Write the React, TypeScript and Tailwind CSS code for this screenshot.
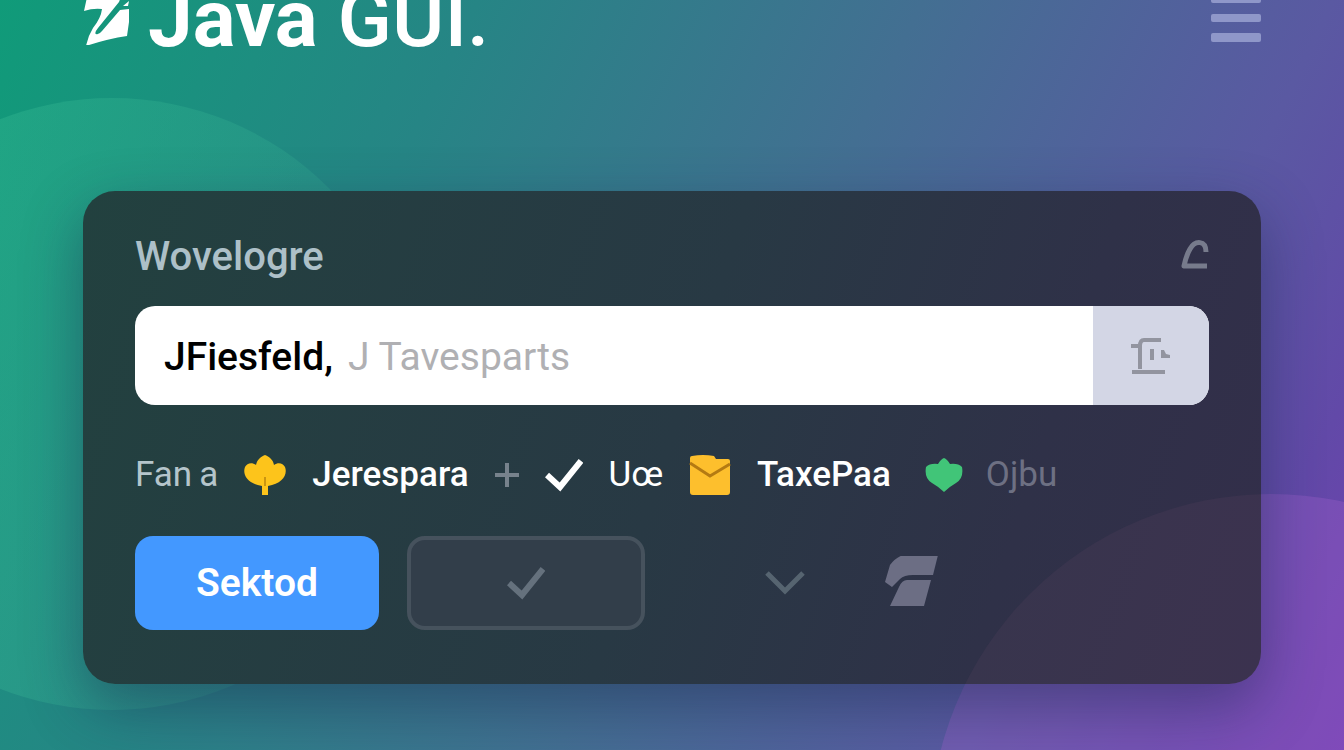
import React from "react";

function LogoMark() {
  return (
    <svg width="48" height="66" viewBox="82 -21 48 66" className="shrink-0" fill="#fff" aria-hidden="true">
      <path d="M83 11 L88 -12 L124 -14 L118 2 L97 28 Q93 33 95 34 Q98 35 101 31 L119 10 L128 9 L128 22 L126 36 Q106 39 85 46 Q87 36 92 28 Q100 18 101 9 Q92 8 83 11 Z" />
      <path d="M122 6 L128 1 L127 6 Z" />
    </svg>
  );
}

function Flower() {
  return (
    <svg width="42" height="42" viewBox="0 0 42 42" className="shrink-0" aria-hidden="true">
      <path
        d="M21 1 C26 3 29 6 30 11 C34 8 39 9 41 13 C44 21 38 30 24 32 V41 H18 V32 C4 30 -2 21 1 13 C3 9 8 8 12 11 C13 6 16 3 21 1 Z"
        fill="#fdc41b"
      />
      <path d="M21 23 V32" stroke="#b8860f" strokeWidth="1.5" />
    </svg>
  );
}

function Folder() {
  return (
    <svg width="42" height="42" viewBox="0 0 42 42" className="shrink-0" aria-hidden="true">
      <path d="M3 2 Q14 0 25 2 L27 5 H39 Q41 5 41 7 V38 Q41 41 38 41 H4 Q1 41 1 38 V4 Q1 2 3 2 Z" fill="#fdbf2d" />
      <path d="M1 9 L21 22 L41 10" fill="none" stroke="#b47a12" strokeWidth="3" />
    </svg>
  );
}

function Leaf() {
  return (
    <svg width="38" height="42" viewBox="0 0 38 42" className="shrink-0" aria-hidden="true">
      <path
        d="M19 4 Q22 5 25 10 Q33 9 37 13 Q39 24 31 29 Q24 33 19 38 Q14 33 7 29 Q-1 24 1 13 Q5 9 13 10 Q16 5 19 4 Z"
        fill="#41c578"
      />
    </svg>
  );
}

function Check() {
  return (
    <svg width="38" height="34" viewBox="0 0 38 34" className="shrink-0" fill="none" stroke="currentColor" aria-hidden="true">
      <path d="M2 17 L15 29 L36 3" strokeWidth="6" />
    </svg>
  );
}

export default function App() {
  return (
    <div className="relative isolate min-h-screen overflow-hidden bg-[linear-gradient(116deg,#109b79_0%,#268585_28%,#436f92_54%,#5a59a2_78%,#6249a8_90%,#7040b0_100%)] px-[83px] pb-[65px] font-['Roboto','Liberation_Sans',sans-serif]">
      <div className="absolute top-[98px] -left-[194px] -z-10 size-[612px] rounded-full bg-[linear-gradient(100deg,#3fc39a50_20%,#3fc39a20_90%)]" />
      <div className="absolute top-[494px] -right-[268px] -z-10 size-[682px] rounded-full bg-[#a763d2]/30" />

      <header className="-mt-[21px] flex h-[212px] items-start justify-between">
        <div className="flex items-start gap-[17px] text-white">
          <LogoMark />
          <h1 className="text-[80px] leading-[80px] font-medium">
            <span className="font-bold">Java</span> GUI.
          </h1>
        </div>
        <button aria-label="Menu" className="mt-[16px] flex w-[50px] flex-col gap-[11px]">
          <span className="h-[8px] w-full rounded-xs bg-[#8f97c9]" />
          <span className="h-[8px] w-full rounded-xs bg-[#8f97c9]" />
          <span className="h-[9px] w-full rounded-xs bg-[#8f97c9]" />
        </button>
      </header>

      <main className="relative overflow-hidden rounded-[32px] bg-[linear-gradient(108deg,#22413f_0%,#283944_50%,#2f3148_78%,#332e4a_100%)] px-[52px] pt-[46px] pb-[54px] shadow-[0_22px_60px_rgba(25,35,75,0.45)]">
        <div className="absolute top-[303px] -right-[351px] size-[682px] rounded-full bg-[#5e4864]/20" />
        <div className="relative flex h-[40px] items-center justify-between">
          <label htmlFor="field" className="text-[40px] leading-[40px] font-medium text-[#adc0c8]">
            Wovelogre
          </label>
          <svg width="28" height="30" viewBox="0 3 28 30" fill="none" stroke="#777b8c" strokeWidth="5" strokeLinejoin="round" overflow="visible" aria-hidden="true">
            <path d="M25 13 C25 1 14 1 9 10 Q5 17 3 27 H26" />
          </svg>
        </div>

        <div className="relative mt-[29px] flex h-[99px] overflow-hidden rounded-[20px] bg-white text-[39px]">
          <input
            id="field"
            defaultValue="JFiesfeld,"
            className="ml-[29px] w-[184px] min-w-0 pt-1 font-medium text-black outline-none"
          />
          <input
            aria-label="J Tavesparts"
            placeholder="J Tavesparts"
            className="min-w-0 flex-1 pt-1 outline-none placeholder:text-[#b0b0b3]"
          />
          <button aria-label="Browse" className="flex w-[116px] items-center justify-center bg-[#d3d6e5]">
            <svg width="40" height="38" viewBox="0 0 40 38" fill="none" stroke="#92949f" strokeWidth="4" aria-hidden="true">
              <path d="M0 9 H9 V32 M9 9 Q9 3 13 3 H30 M1 35 H34 M21 12 V23" />
              <path d="M30 13 H33 L35 17 L39 18 V21 H30 Z" fill="#92949f" stroke="none" />
            </svg>
          </button>
        </div>

        <div className="relative mt-[49px] flex h-[42px] items-center gap-[26px] text-[35px] whitespace-nowrap text-white">
          <span className="text-[#b5c5cb]">Fan{"\u2009"}a</span>
          <Flower />
          <span className="font-medium">Jerespara</span>
          <svg width="24" height="24" viewBox="0 0 24 24" stroke="#77828c" strokeWidth="4" className="shrink-0" aria-hidden="true">
            <path d="M12 0 V24 M0 12 H24" />
          </svg>
          <Check />
          <span>Uœ</span>
          <Folder />
          <span className="font-medium">TaxePaa</span>
          <span className="flex items-center gap-[23px] pl-2">
            <Leaf />
            <span className="text-[#6d7083]">Ojbu</span>
          </span>
        </div>

        <div className="relative mt-[40px] flex h-[94px] items-center">
          <button className="h-full w-[244px] rounded-[18px] bg-[#4398ff] text-[39px] font-semibold text-white">Sektod</button>
          <button
            aria-label="Confirm"
            className="ml-[28px] flex h-full w-[238px] items-center justify-center rounded-[18px] border-4 border-[#46525d] bg-[#323e4a] text-[#65717d]"
          >
            <Check />
          </button>
          <button aria-label="Expand" className="ml-[120px]">
            <svg width="40" height="24" viewBox="0 0 40 24" fill="none" stroke="#566470" strokeWidth="5" aria-hidden="true">
              <path d="M2 2 L20 20 L38 2" />
            </svg>
          </button>
          <svg width="54" height="54" viewBox="0 2 54 54" fill="#6c6e84" className="ml-[80px]" aria-hidden="true">
            <path d="M18 1 H53 L48 21 H28 Q19 21 15 25 L7 33 L0 28 L5 11 Q10 4 18 1 Z" />
            <path d="M22 26 H46 L39 52 H5 L14 33 Q17 26 22 26 Z" />
          </svg>
        </div>
      </main>
    </div>
  );
}
